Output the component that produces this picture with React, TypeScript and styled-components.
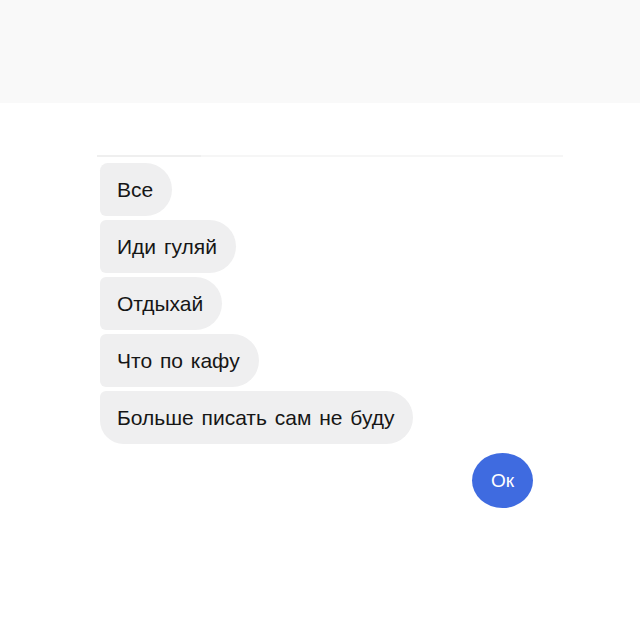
import React from "react";
import styled, { createGlobalStyle } from "styled-components";

const Global = createGlobalStyle`
  html, body { margin: 0; padding: 0; background: #ffffff; }
  body { font-family: "Liberation Sans", Arial, sans-serif; }
  *, *::before, *::after { box-sizing: border-box; }
`;

const Page = styled.div`
  width: 640px;
  height: 640px;
  display: flex;
  flex-direction: column;
  background: #ffffff;
`;

const TopBand = styled.div`
  height: 103px;
  background: #f9f9f9;
  flex-shrink: 0;
`;

const Chat = styled.div`
  margin: 52px 0 0 97px;
  width: 466px;
  border-top: 2px solid #f6f6f6;
  padding: 6px 30px 0 3px;
  display: flex;
  flex-direction: column;
  gap: 4px;
  position: relative;
`;

const TopAccent = styled.div`
  position: absolute;
  left: 0;
  top: -2px;
  width: 104px;
  height: 2px;
  background: #efefef;
`;

const Bubble = styled.div<{ $last?: boolean; $first?: boolean }>`
  align-self: flex-start;
  height: 53px;
  display: flex;
  align-items: center;
  padding: 0 19px 0 17px;
  background: #efeff0;
  color: #161616;
  font-size: 21px;
  word-spacing: 2px;
  border-radius: ${(p) => (p.$first ? "8px" : "6px")} 27px 27px
    ${(p) => (p.$last ? "24px" : "6px")};
  white-space: nowrap;
`;

const OkRow = styled.div`
  display: flex;
  justify-content: flex-end;
  margin-top: 5px;
`;

const OkBubble = styled.div`
  width: 61px;
  height: 55px;
  border-radius: 50%;
  background: #3f6be0;
  color: #ffffff;
  font-size: 19px;
  display: flex;
  align-items: center;
  justify-content: center;
`;

const messages = [
  "Все",
  "Иди гуляй",
  "Отдыхай",
  "Что по кафу",
  "Больше писать сам не буду",
];

export default function App() {
  return (
    <Page>
      <Global />
      <TopBand />
      <Chat>
        <TopAccent />
        {messages.map((m, i) => (
          <Bubble key={i} $first={i === 0} $last={i === messages.length - 1}>
            {m}
          </Bubble>
        ))}
        <OkRow>
          <OkBubble>Ок</OkBubble>
        </OkRow>
      </Chat>
    </Page>
  );
}
